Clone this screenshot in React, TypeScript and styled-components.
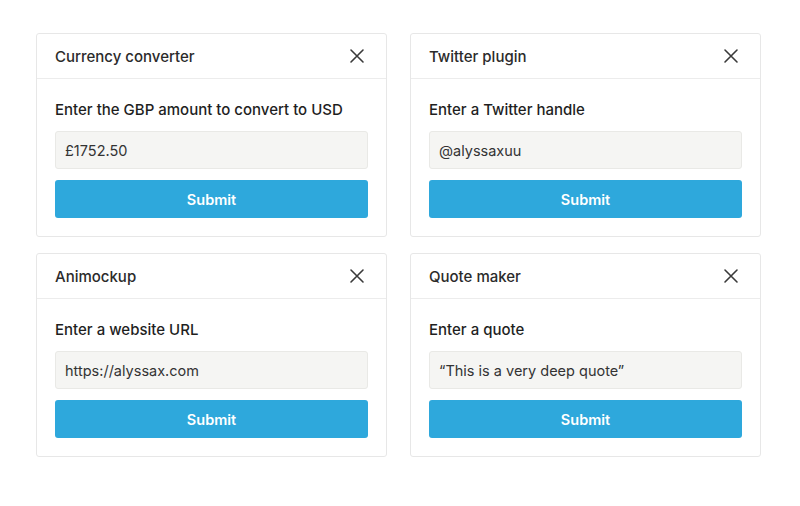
import React from 'react';
import styled, { createGlobalStyle } from 'styled-components';

const GlobalStyle = createGlobalStyle`
  body {
    margin: 0;
    background: #ffffff;
    font-family: Inter, "Noto Sans", sans-serif;
    -webkit-font-smoothing: antialiased;
  }
`;

const Page = styled.div`
  display: grid;
  grid-template-columns: 351px 351px;
  column-gap: 23px;
  row-gap: 16px;
  padding: 33px 0 0 36px;
`;

const Card = styled.div`
  border: 1px solid #e7e7e7;
  border-radius: 3px;
  background: #fff;
  display: flex;
  flex-direction: column;
`;

const Header = styled.div`
  height: 44px;
  display: flex;
  align-items: center;
  justify-content: space-between;
  padding: 0 21px 0 18px;
  border-bottom: 1px solid #ececec;
`;

const Title = styled.h3`
  margin: 0;
  font-size: 15px;
  font-weight: 500;
  color: #2b2b2b;
`;

const CloseButton = styled.button`
  border: none;
  background: none;
  padding: 0;
  width: 16px;
  height: 16px;
  display: flex;
  align-items: center;
  justify-content: center;
  cursor: pointer;
`;

const Body = styled.div`
  padding: 21px 18px 18px 18px;
  display: flex;
  flex-direction: column;
`;

const Label = styled.label`
  font-size: 15px;
  font-weight: 500;
  color: #1f1f1f;
  line-height: 20px;
  margin-bottom: 11px;
`;

const Input = styled.input`
  height: 38px;
  box-sizing: border-box;
  border: 1px solid #e9e9e6;
  border-radius: 3px;
  background: #f5f5f3;
  padding: 0 9px;
  font-family: inherit;
  font-size: 14.5px;
  color: #333;
  margin-bottom: 11px;
  outline: none;
`;

const Submit = styled.button`
  height: 38px;
  border: none;
  border-radius: 3px;
  background: #2ea8dc;
  color: #fff;
  font-family: inherit;
  font-size: 14.5px;
  font-weight: 600;
  cursor: pointer;
`;

const XIcon = () => (
  <svg width="16" height="16" viewBox="0 0 16 16" fill="none">
    <path d="M2 2L14 14M14 2L2 14" stroke="#3a3a3a" strokeWidth="1.6" strokeLinecap="round" />
  </svg>
);

const plugins = [
  { title: 'Currency converter', label: 'Enter the GBP amount to convert to USD', value: '£1752.50' },
  { title: 'Twitter plugin', label: 'Enter a Twitter handle', value: '@alyssaxuu' },
  { title: 'Animockup', label: 'Enter a website URL', value: 'https://alyssax.com' },
  { title: 'Quote maker', label: 'Enter a quote', value: '\u201CThis is a very deep quote\u201D' },
];

const App = () => (
  <>
    <GlobalStyle />
    <Page>
      {plugins.map((p) => (
        <Card key={p.title}>
          <Header>
            <Title>{p.title}</Title>
            <CloseButton aria-label="Close">
              <XIcon />
            </CloseButton>
          </Header>
          <Body>
            <Label>{p.label}</Label>
            <Input defaultValue={p.value} />
            <Submit>Submit</Submit>
          </Body>
        </Card>
      ))}
    </Page>
  </>
);

export default App;
